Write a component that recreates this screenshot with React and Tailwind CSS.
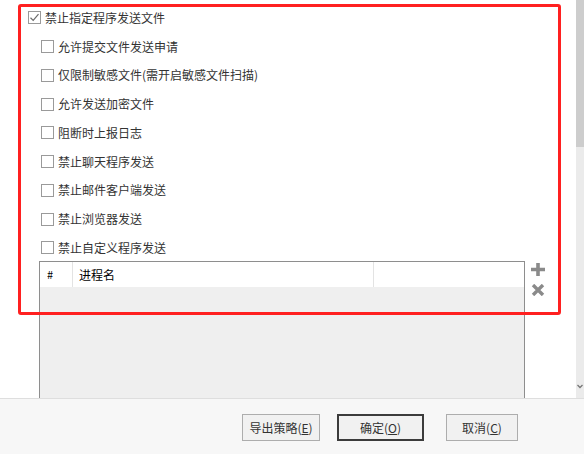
import React from "react";

const FONT = { fontFamily: '"Noto Sans CJK SC", "Noto Sans", sans-serif' };

const options = [
  "允许提交文件发送申请",
  "仅限制敏感文件(需开启敏感文件扫描)",
  "允许发送加密文件",
  "阻断时上报日志",
  "禁止聊天程序发送",
  "禁止邮件客户端发送",
  "禁止浏览器发送",
  "禁止自定义程序发送",
];

const CheckBox = ({ checked }) => (
  <span className="w-[13px] h-[13px] border border-[#9a9a9a] bg-white flex items-center justify-center shrink-0">
    {checked && (
      <svg width="11" height="11" viewBox="0 0 11 11">
        <path d="M1.5 5.8 L4.2 8.4 L9.5 2.2" fill="none" stroke="#6b6b6b" strokeWidth="1.2" />
      </svg>
    )}
  </span>
);

const Option = ({ label, checked, indent }) => (
  <div className={`h-[28.75px] flex items-center gap-[4px] ${indent ? "pl-[41px]" : "pl-[28px]"}`}>
    <CheckBox checked={checked} />
    <span className="text-[12px] text-[#333] leading-none">{label}</span>
  </div>
);

const Button = ({ label, hotkey, width, primary }) => (
  <button
    className={`h-[27px] ${width} bg-[#f1f1f1] text-[12px] text-[#333] flex items-center justify-center ${
      primary ? "border-2 border-[#3c3c3c]" : "border border-[#adadad]"
    }`}
  >
    {label}(<span className="underline">{hotkey}</span>)
  </button>
);

export default function App() {
  return (
    <div className="w-[584px] h-[454px] bg-white flex flex-col overflow-hidden" style={FONT}>
      <div className="h-[398px] flex">
        <div className="relative flex-1 overflow-hidden pt-[3.5px]">
          <Option label="禁止指定程序发送文件" checked />
          {options.map((o) => (
            <Option key={o} label={o} indent />
          ))}

          <div className="flex pl-[39px] -mt-[1.25px]">
            {/* process list */}
            <div className="w-[486px] h-[160px] border border-[#8e8e8e] bg-[#efefef] flex flex-col">
              <div className="h-[25px] bg-white flex text-[12px] text-black">
                <div className="w-[33px] pl-[7px] flex items-center border-r border-[#e3e3e3] text-[11px]">#</div>
                <div className="w-[301px] pl-[6px] flex items-center border-r border-[#e3e3e3]">进程名</div>
                <div className="flex-1" />
              </div>
            </div>
            <div className="flex flex-col gap-[8px] ml-[6px] pt-[2px]">
              <svg width="14" height="13" viewBox="0 0 14 13">
                <path d="M7 0 V13 M0 6.5 H14" stroke="#8a8a8a" strokeWidth="3.6" />
              </svg>
              <svg width="14" height="12" viewBox="0 0 14 12">
                <path d="M2 1 L12 11 M12 1 L2 11" stroke="#8a8a8a" strokeWidth="3.4" />
              </svg>
            </div>
          </div>

          {/* highlight frame */}
          <div className="absolute left-[18px] top-[4px] w-[543px] h-[311px] border-[3px] border-[#ff2020] rounded-[3px] pointer-events-none" />
        </div>

        {/* scrollbar */}
        <div className="w-[8px] bg-[#ebebeb] flex flex-col">
          <div className="h-[147px] bg-[#cdcdcd]" />
          <div className="flex-1" />
          <div className="h-[14px] flex items-start justify-center">
            <svg width="6" height="5" viewBox="0 0 6 5">
              <path d="M0.5 1 L3 3.5 L5.5 1" fill="none" stroke="#777" strokeWidth="1.3" />
            </svg>
          </div>
        </div>
      </div>

      <div className="flex-1 bg-[#f7f7f7] border-t border-[#dedede] flex items-start justify-end pt-[15px] pr-[66px]">
        <Button label="导出策略" hotkey="E" width="w-[78px]" />
        <div className="w-[17px]" />
        <Button label="确定" hotkey="O" width="w-[87px]" primary />
        <div className="w-[22px]" />
        <Button label="取消" hotkey="C" width="w-[72px]" />
      </div>
    </div>
  );
}
